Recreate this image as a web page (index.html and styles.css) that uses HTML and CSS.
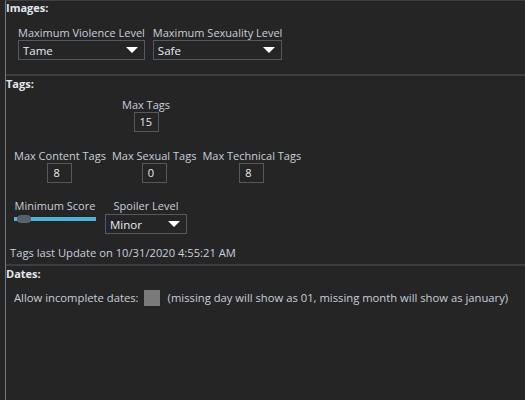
FILE: index.html
```html
<!DOCTYPE html>
<html>
<head>
<meta charset="utf-8">
<link rel="stylesheet" href="styles.css">
</head>
<body>
<div class="panel">
  <section class="sec sec-images">
    <div class="sec-title">Images:</div>
    <div class="row img-row">
      <div class="field">
        <div class="lbl">Maximum Violence Level</div>
        <div class="select"><span>Tame</span><i class="caret"></i></div>
      </div>
      <div class="field">
        <div class="lbl">Maximum Sexuality Level</div>
        <div class="select"><span>Safe</span><i class="caret"></i></div>
      </div>
    </div>
  </section>
  <section class="sec sec-tags">
    <div class="sec-title">Tags:</div>
    <div class="field center maxtags">
      <div class="lbl">Max Tags</div>
      <div class="num">15</div>
    </div>
    <div class="row tag-row">
      <div class="field center">
        <div class="lbl">Max Content Tags</div>
        <div class="num">8</div>
      </div>
      <div class="field center">
        <div class="lbl">Max Sexual Tags</div>
        <div class="num">0</div>
      </div>
      <div class="field center">
        <div class="lbl">Max Technical Tags</div>
        <div class="num">8</div>
      </div>
    </div>
    <div class="row score-row">
      <div class="field center score">
        <div class="lbl">Minimum Score</div>
        <div class="slider"><div class="thumb"></div></div>
      </div>
      <div class="field center spoiler">
        <div class="lbl">Spoiler Level</div>
        <div class="select"><span>Minor</span><i class="caret"></i></div>
      </div>
    </div>
    <div class="updated">Tags last Update on 10/31/2020 4:55:21 AM</div>
  </section>
  <section class="sec sec-dates">
    <div class="sec-title">Dates:</div>
    <div class="dates-row">
      <span class="lbl">Allow incomplete dates:</span>
      <span class="check"></span>
      <span class="lbl">(missing day will show as 01, missing month will show as january)</span>
    </div>
  </section>
</div>
</body>
</html>
```
FILE: styles.css
```css
html, body {
  margin: 0;
  padding: 0;
  background: #252525;
  height: 100%;
}
body {
  font-family: "Open Sans", "Noto Sans", sans-serif;
  font-size: 11px;
  color: #c7cfdc;
}
.panel {
  box-sizing: border-box;
  margin-left: 5px;
  border-left: 1px solid #74787f;
  border-top: 1px solid #3c3f43;
  min-height: 100%;
}
.sec {
  border-bottom: 2px solid #3a3d41;
}
.sec-title {
  font-weight: bold;
  color: #e2e8f2;
  line-height: 14px;
  padding-left: 0;
}
.lbl {
  line-height: 14px;
  white-space: nowrap;
}
.row {
  display: flex;
}
.field {
  display: flex;
  flex-direction: column;
}
.center {
  align-items: center;
}
.sec-images {
  padding-bottom: 14px;
}
.img-row {
  margin-left: 12px;
  margin-top: 11px;
  gap: 8px;
}
.select {
  box-sizing: border-box;
  height: 20px;
  border: 1px solid #55585d;
  display: flex;
  align-items: center;
  justify-content: space-between;
  padding: 0 6px 0 4px;
  color: #e6ebf2;
  font-size: 11.5px;
  align-self: stretch;
}
.caret {
  width: 0;
  height: 0;
  border-left: 6px solid transparent;
  border-right: 6px solid transparent;
  border-top: 6px solid #ffffff;
}
.num {
  box-sizing: border-box;
  width: 25px;
  height: 20px;
  border: 1px solid #55585d;
  color: #e6ebf2;
  line-height: 18px;
  padding-left: 5px;
}
.sec-tags {
  padding-bottom: 4px;
}
.sec-tags .sec-title {
  margin-top: 1px;
}
.maxtags {
  width: 90px;
  margin-left: 95px;
  margin-top: 7px;
}
.tag-row {
  margin-left: 8px;
  margin-top: 17px;
  gap: 6px;
}
.score-row {
  margin-left: 8px;
  margin-top: 16px;
  gap: 9px;
}
.score {
  width: 82px;
}
.spoiler {
  width: 82px;
}
.spoiler .select {
  margin-top: 1px;
}
.slider {
  position: relative;
  align-self: stretch;
  height: 4px;
  background: #4cb3d8;
  margin-top: 4px;
}
.thumb {
  position: absolute;
  left: 3px;
  top: -2px;
  width: 14px;
  height: 8px;
  border-radius: 4px;
  background: #5a5f68;
}
.updated {
  margin-left: 4px;
  margin-top: 12px;
  line-height: 14px;
  font-size: 11.2px;
}
.sec-dates {
  border-bottom: none;
}
.sec-dates .sec-title {
  margin-top: 1px;
}
.dates-row {
  display: flex;
  align-items: center;
  margin-left: 8px;
  margin-top: 9px;
  font-size: 11.25px;
}
.check {
  flex: none;
  width: 16px;
  height: 16px;
  background: #7a7a7a;
  margin: 0 8px 0 5px;
}
```
